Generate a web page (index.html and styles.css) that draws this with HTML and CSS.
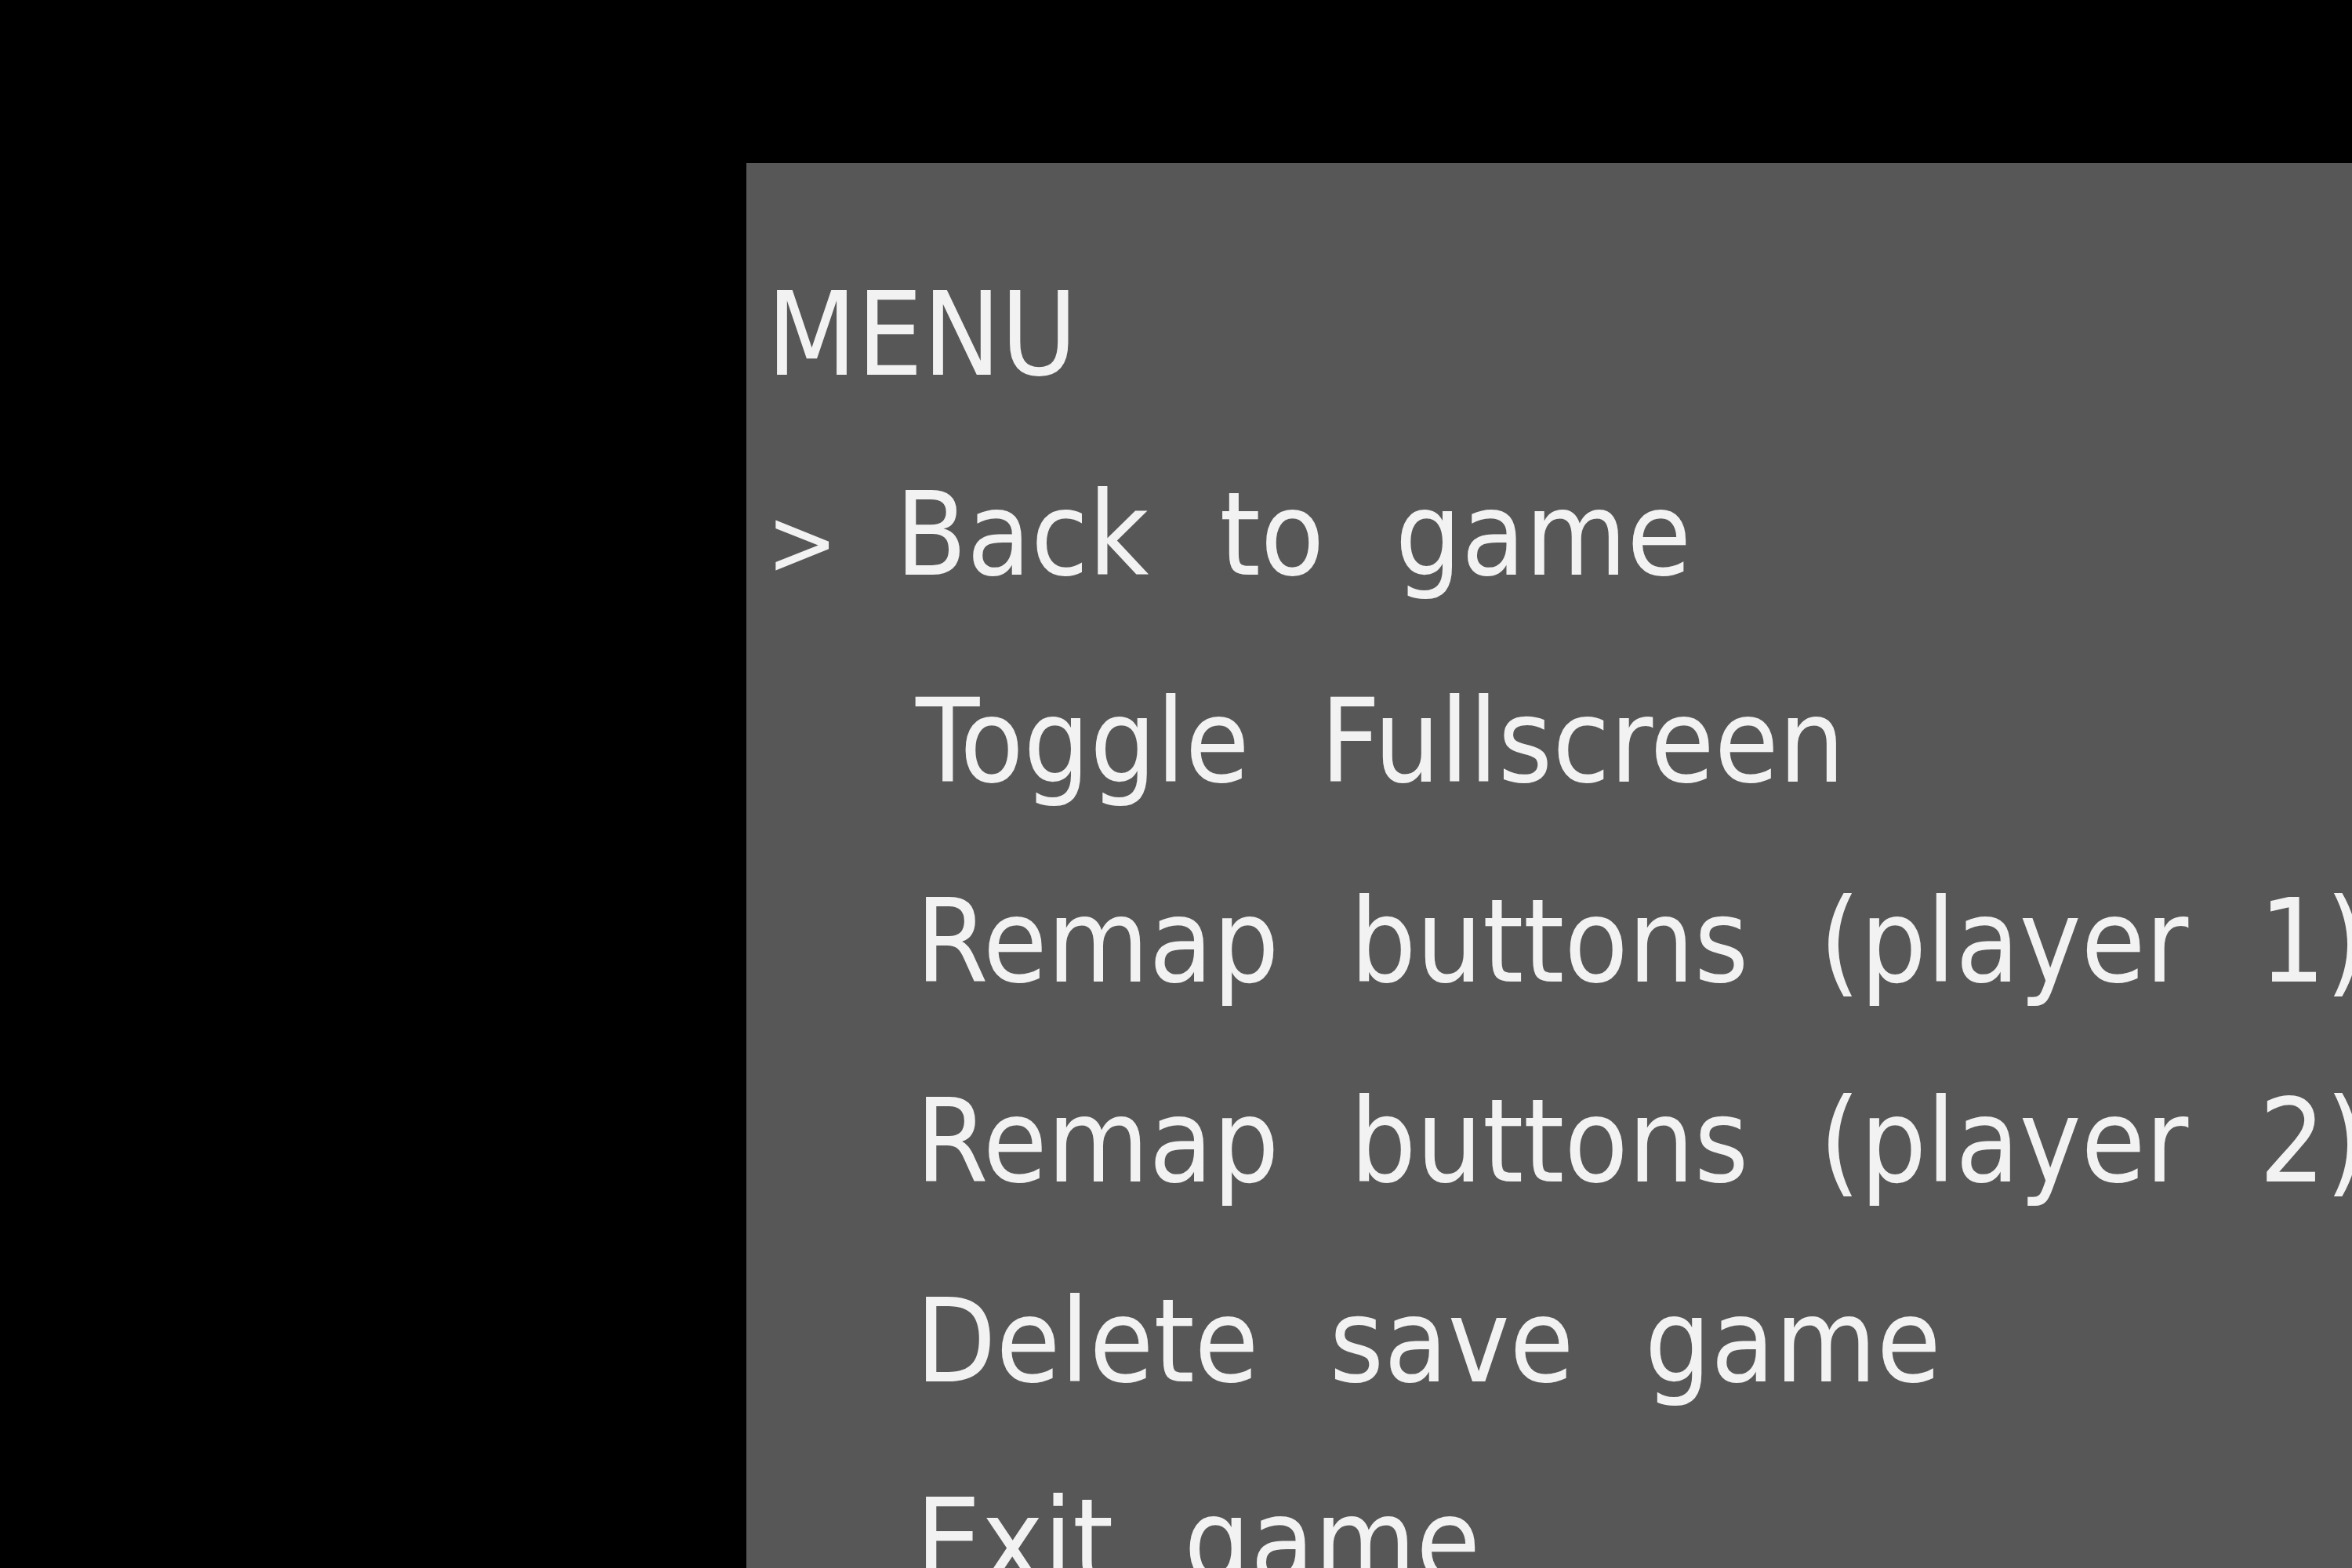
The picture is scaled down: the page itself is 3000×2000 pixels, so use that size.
FILE: index.html
```html
<!DOCTYPE html>
<html lang="en">
<head>
  <meta charset="UTF-8" />
  <title>Menu</title>
  <link rel="stylesheet" href="styles.css">
</head>
<body>

<div class="menu">
  <div class="title">MENU</div>
  <ul class="items">
    <li class="item selected"><span class="cursor">&gt;</span>Back to game</li>
    <li class="item">Toggle Fullscreen</li>
    <li class="item">Remap buttons (player 1)</li>
    <li class="item">Remap buttons (player 2)</li>
    <li class="item">Delete save game</li>
    <li class="item">Exit game</li>
  </ul>
</div>

</body>
</html>
```
FILE: styles.css
```css
html, body {
  margin: 0;
  height: 2000px;
  overflow: hidden;
  background: #000;
}
.menu {
  margin: 208px 0 0 952px;
  height: 1792px;
  padding: 92px 0 0 26px;
  box-sizing: border-box;
  background: #575757;
  color: #f2f2f2;
  font-family: "DejaVu Sans Condensed", "DejaVu Sans", sans-serif;
  font-size: 148px;
  line-height: 255px;
  word-spacing: 48px;
  white-space: nowrap;
}
.items {
  list-style: none;
  margin: 0;
  padding: 0;
}
.item {
  padding-left: 190px;
}
.item.selected {
  padding-left: 0;
}
.cursor {
  display: inline-block;
  width: 164px;
  font-size: 120px;
}
```
